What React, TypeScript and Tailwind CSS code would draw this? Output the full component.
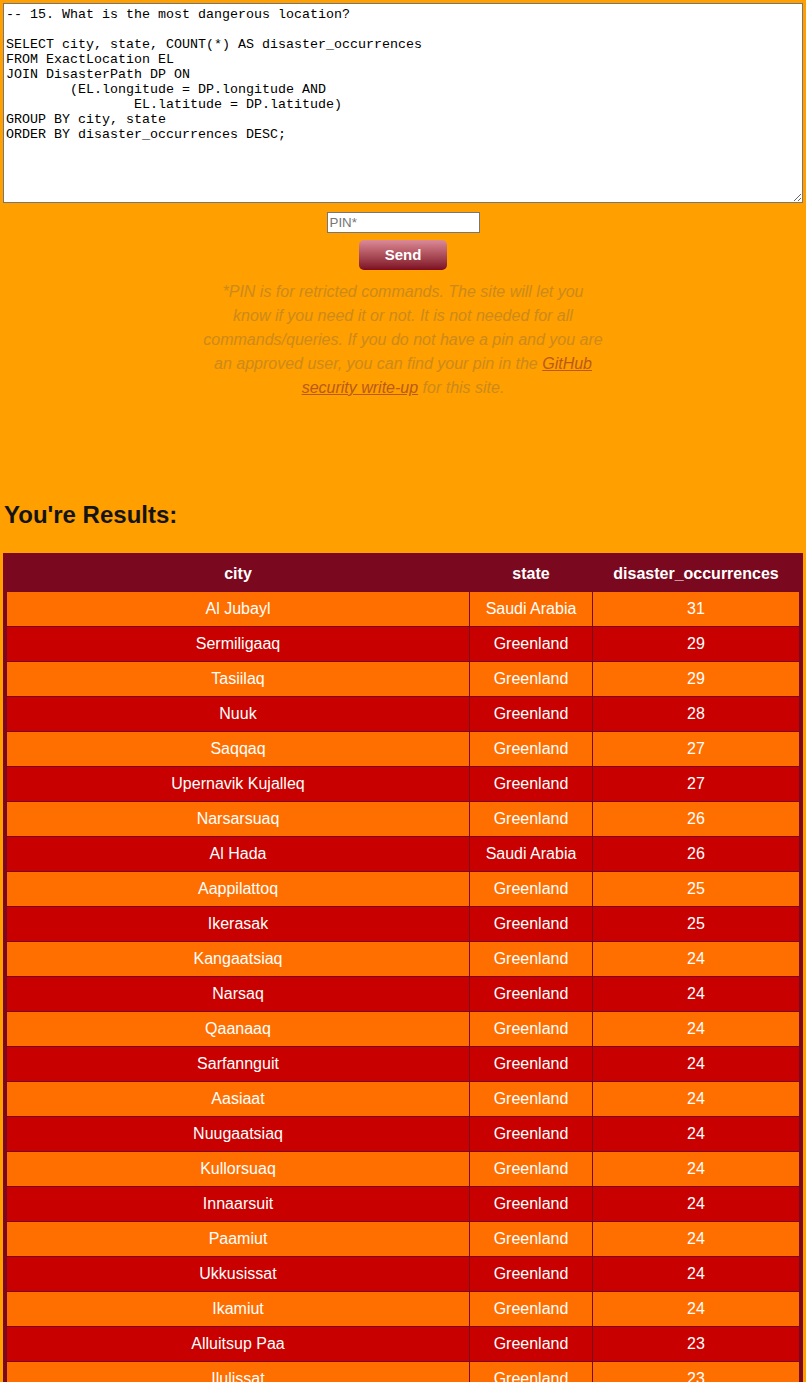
import React from 'react';

const query = `-- 15. What is the most dangerous location?

SELECT city, state, COUNT(*) AS disaster_occurrences
FROM ExactLocation EL
JOIN DisasterPath DP ON
        (EL.longitude = DP.longitude AND
                EL.latitude = DP.latitude)
GROUP BY city, state
ORDER BY disaster_occurrences DESC;`;

const rows: [string, string, number][] = [
  ['Al Jubayl', 'Saudi Arabia', 31],
  ['Sermiligaaq', 'Greenland', 29],
  ['Tasiilaq', 'Greenland', 29],
  ['Nuuk', 'Greenland', 28],
  ['Saqqaq', 'Greenland', 27],
  ['Upernavik Kujalleq', 'Greenland', 27],
  ['Narsarsuaq', 'Greenland', 26],
  ['Al Hada', 'Saudi Arabia', 26],
  ['Aappilattoq', 'Greenland', 25],
  ['Ikerasak', 'Greenland', 25],
  ['Kangaatsiaq', 'Greenland', 24],
  ['Narsaq', 'Greenland', 24],
  ['Qaanaaq', 'Greenland', 24],
  ['Sarfannguit', 'Greenland', 24],
  ['Aasiaat', 'Greenland', 24],
  ['Nuugaatsiaq', 'Greenland', 24],
  ['Kullorsuaq', 'Greenland', 24],
  ['Innaarsuit', 'Greenland', 24],
  ['Paamiut', 'Greenland', 24],
  ['Ukkusissat', 'Greenland', 24],
  ['Ikamiut', 'Greenland', 24],
  ['Alluitsup Paa', 'Greenland', 23],
  ['Ilulissat', 'Greenland', 23],
  ['Qeqertarsuaq', 'Greenland', 23],
  ['Kuummiut', 'Greenland', 23],
];

export default function App() {
  return (
    <div className="min-h-screen bg-[#ff9f00] px-[3px] pt-[3px] pb-10 font-['Liberation_Sans',Arial,sans-serif]">
      <textarea
        readOnly
        defaultValue={query}
        className="block w-[800px] h-[200px] bg-white border border-[#767676] px-[2px] py-[3px] font-['Liberation_Mono','Courier_New',monospace] text-[13.33px] leading-[15px] text-black resize-y outline-none"
      />

      <div className="flex flex-col items-center">
        <input
          type="text"
          placeholder="PIN*"
          className="mt-[9px] w-[153px] h-[21px] bg-white border border-[#767676] px-[2px] text-[13.33px] text-black placeholder:text-[#757575] outline-none"
        />
        <button className="mt-[7px] w-[88px] h-[30px] rounded-[5px] bg-gradient-to-b from-[#dc8a98] to-[#7c0a22] text-white font-bold text-[15px]">
          Send
        </button>
        <p className="mt-[10px] w-[401px] text-center italic text-[16px] leading-[24px] text-[#cc8a1c]">
          *PIN is for retricted commands. The site will let you know if you need it or not. It is not
          needed for all commands/queries. If you do not have a pin and you are an approved user, you
          can find your pin in the{' '}
          <a href="#" className="underline text-[#b95a1c]">
            GitHub security write-up
          </a>{' '}
          for this site.
        </p>
      </div>

      <h2 className="mt-[101px] ml-[1px] text-[24px] leading-[28px] font-bold text-[#141414]">
        You're Results:
      </h2>

      <table className="mt-[24px] w-[800px] border-[3px] border-[#7a081e] bg-[#7a081e] border-separate border-spacing-[1px] text-white text-[16px] text-center">
        <thead>
          <tr className="h-[34px]">
            <th className="w-[462px] font-bold">city</th>
            <th className="w-[122px] font-bold">state</th>
            <th className="font-bold">disaster_occurrences</th>
          </tr>
        </thead>
        <tbody>
          {rows.map(([city, state, n], i) => (
            <tr key={city} className={`h-[34px] ${i % 2 === 0 ? 'bg-[#ff6f00]' : 'bg-[#c80000]'}`}>
              <td>{city}</td>
              <td>{state}</td>
              <td>{n}</td>
            </tr>
          ))}
        </tbody>
      </table>
    </div>
  );
}
